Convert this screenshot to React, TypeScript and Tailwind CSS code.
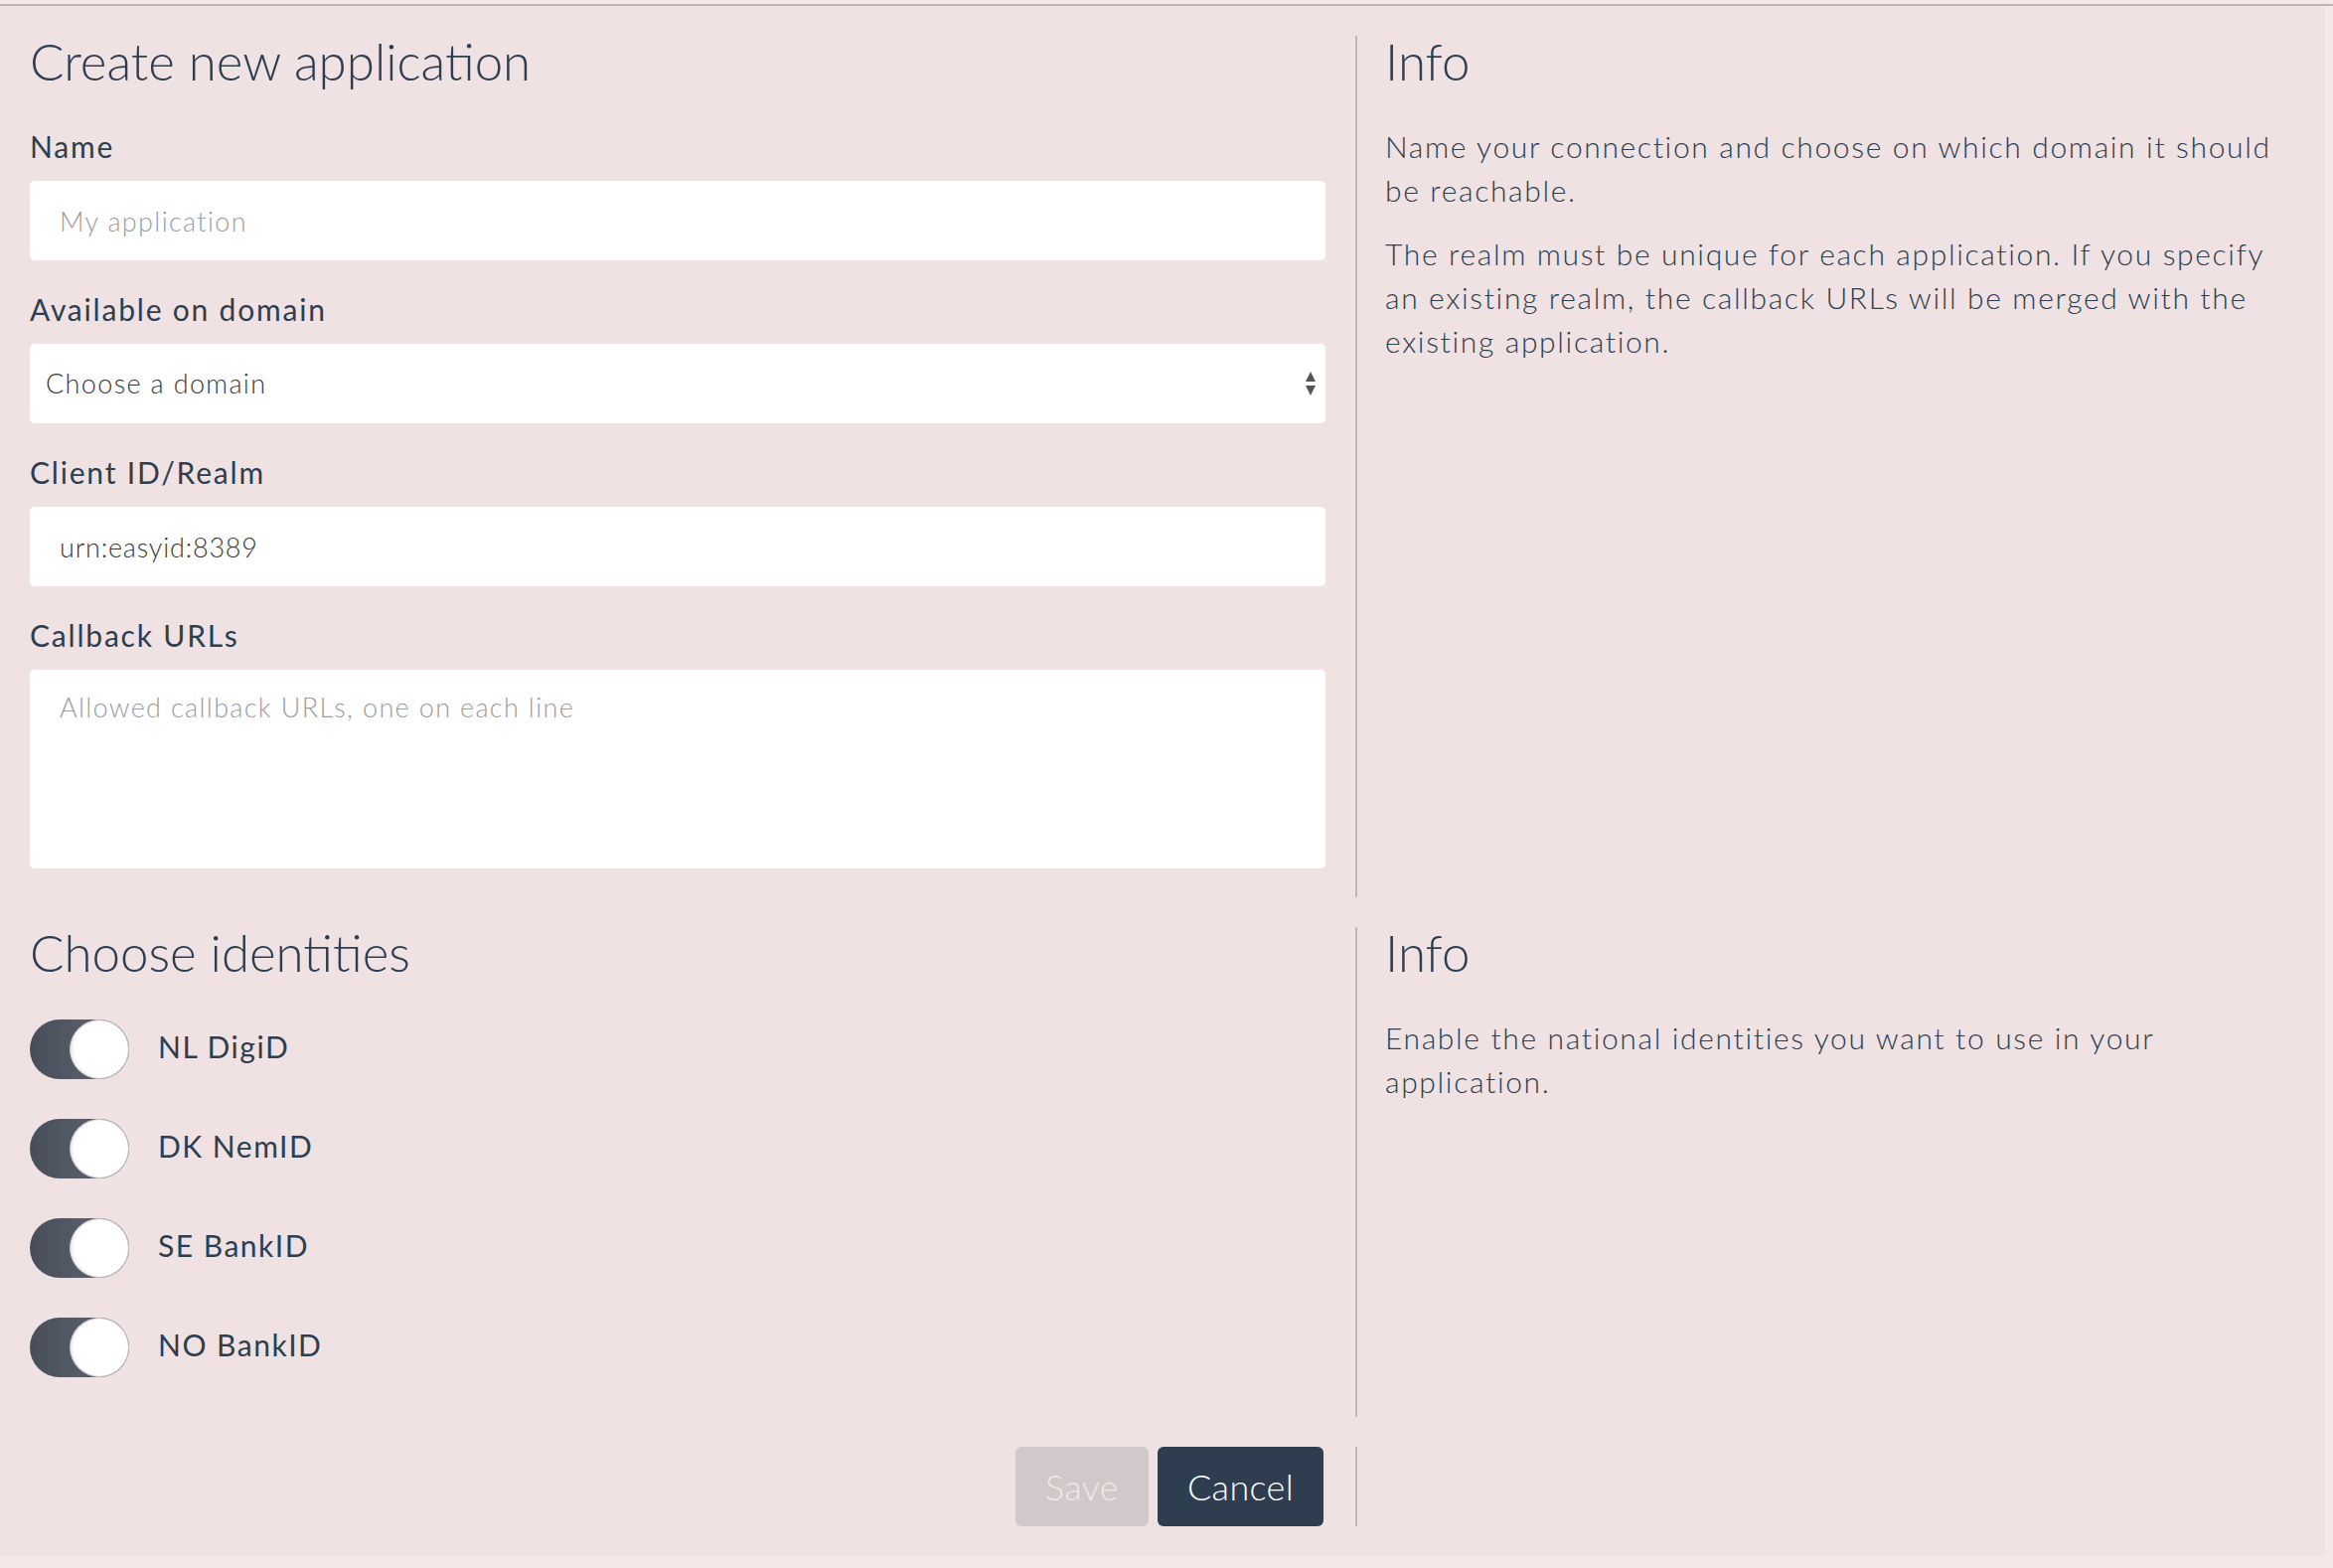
import React from 'react';

const identities = ['NL DigiD', 'DK NemID', 'SE BankID', 'NO BankID'];

const Field: React.FC<{ label: string; children: React.ReactNode }> = ({ label, children }) => (
  <div>
    <label className="block text-[30px] leading-[45px] tracking-[0.06em] mb-[12px]">{label}</label>
    {children}
  </div>
);

const Toggle: React.FC<{ label: string }> = ({ label }) => (
  <div className="flex items-center h-[60px]">
    <div className="relative w-[100px] h-[60px] rounded-full bg-gradient-to-r from-[#484e59] to-[#646a75]">
      <div className="absolute right-0 top-0 w-[60px] h-[60px] rounded-full bg-white border border-[#c4c0c0] shadow-[inset_2px_0_3px_rgba(0,0,0,0.08)]" />
    </div>
    <span className="ml-[29px] pb-[6px] text-[30px] leading-[45px] tracking-[0.05em]">{label}</span>
  </div>
);

const InfoCell: React.FC<{ children: React.ReactNode }> = ({ children }) => (
  <div className="border-l-2 border-[#bfb8b9] pl-[28px] pr-[30px]">
    <h2 className="text-[51px] leading-none font-light mb-[38px]">Info</h2>
    <div className="flex flex-col gap-[20px] text-[30px] leading-[44px] tracking-[0.055em] font-light">{children}</div>
  </div>
);

export default function App() {
  return (
    <div className="min-h-screen bg-[#f6e8e8] font-['Lato',sans-serif] text-[#2c3e50]">
      <div className="h-[4px]" />
      <div className="h-[2px] bg-[#bcb4b5]" />
      <div className="w-[2340px] bg-[#f0e2e2] pt-[30px] pb-[30px]">
        {/* application details */}
        <div className="grid grid-cols-[1364px_1fr]">
          <div className="px-[30px] pb-[29px]">
            <h1 className="text-[51px] leading-none font-light mb-[38px]">Create new application</h1>
            <div className="flex flex-col gap-[27px]">
              <Field label="Name">
                <input
                  className="w-full h-[80px] rounded-[5px] bg-white px-[30px] text-[27px] tracking-[0.05em] font-light outline-none placeholder:text-[#9d9d9d]"
                  placeholder="My application"
                />
              </Field>
              <Field label="Available on domain">
                <div className="relative">
                  <select className="w-full h-[80px] rounded-[5px] bg-white pl-[16px] pr-[40px] text-[27px] tracking-[0.05em] font-light text-[#3a3a3a] appearance-none outline-none">
                    <option>Choose a domain</option>
                  </select>
                  <svg className="absolute right-[9px] top-[27px] pointer-events-none" width="12" height="26" viewBox="0 0 12 26">
                    <path d="M6 1 L11 11 L1 11 Z" fill="#555" />
                    <path d="M1 15 L11 15 L6 25 Z" fill="#555" />
                  </svg>
                </div>
              </Field>
              <Field label="Client ID/Realm">
                <input
                  className="w-full h-[80px] rounded-[5px] bg-white px-[30px] text-[27px] tracking-[0.03em] font-light text-[#3a3a3a] outline-none"
                  defaultValue="urn:easyid:8389"
                />
              </Field>
              <Field label="Callback URLs">
                <textarea
                  className="block w-full h-[200px] rounded-[5px] bg-white px-[30px] py-[18px] text-[27px] tracking-[0.05em] font-light outline-none resize-none placeholder:text-[#9d9d9d]"
                  placeholder="Allowed callback URLs, one on each line"
                />
              </Field>
            </div>
          </div>
          <InfoCell>
            <p>Name your connection and choose on which domain it should be reachable.</p>
            <p>
              The realm must be unique for each application. If you specify an existing realm, the callback URLs will be
              merged with the existing application.
            </p>
          </InfoCell>
        </div>

        {/* identities */}
        <div className="grid grid-cols-[1364px_1fr] mt-[30px]">
          <div className="px-[30px] pb-[40px]">
            <h1 className="text-[51px] leading-none font-light mb-[42px]">Choose identities</h1>
            <div className="flex flex-col gap-[40px]">
              {identities.map((id) => (
                <Toggle key={id} label={id} />
              ))}
            </div>
          </div>
          <InfoCell>
            <p>Enable the national identities you want to use in your application.</p>
          </InfoCell>
        </div>

        {/* actions */}
        <div className="grid grid-cols-[1364px_1fr] mt-[30px]">
          <div className="flex justify-end gap-[9px] px-[32px]">
            <button className="h-[80px] px-[30px] rounded-[6px] bg-[#d3c8c9] text-[#f2e6e6] text-[36px] tracking-[0.01em] font-light">Save</button>
            <button className="h-[80px] px-[30px] rounded-[6px] bg-[#2e3e50] text-white text-[36px] tracking-[0.01em] font-light">Cancel</button>
          </div>
          <div className="border-l-2 border-[#bfb8b9]" />
        </div>
      </div>
    </div>
  );
}
